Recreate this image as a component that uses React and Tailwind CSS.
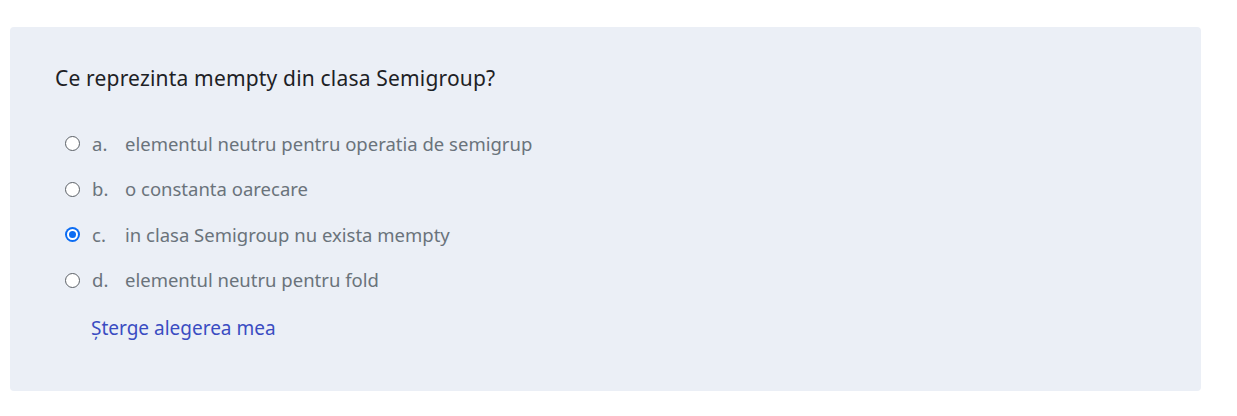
import React from "react";

const options = [
  { l: "a.", t: "elementul neutru pentru operatia de semigrup" },
  { l: "b.", t: "o constanta oarecare" },
  { l: "c.", t: "in clasa Semigroup nu exista mempty", checked: true },
  { l: "d.", t: "elementul neutru pentru fold" },
];

function Radio({ checked }) {
  if (checked) {
    return (
      <span className="w-[15px] h-[15px] rounded-full bg-[#0b6cf3] flex items-center justify-center shrink-0">
        <span className="w-[11px] h-[11px] rounded-full bg-white flex items-center justify-center">
          <span className="w-[7px] h-[7px] rounded-full bg-[#0b6cf3]" />
        </span>
      </span>
    );
  }
  return <span className="w-[15px] h-[15px] rounded-full border-[1.5px] border-[#5b6066] bg-white shrink-0" />;
}

export default function App() {
  return (
    <div className="w-[1237px] h-[416px] bg-white pt-[27px] pl-[10px]" style={{ fontFamily: "'Noto Sans', sans-serif" }}>
      <div className="w-[1191px] h-[364px] bg-[#ebeff6] rounded-[4px] pl-[45px] pt-[37px]">
        <div className="text-[21px] leading-[29px] tracking-[0.18px] text-[#1d2125]">Ce reprezinta mempty din clasa Semigroup?</div>
        <div className="mt-[28px] pl-[10px] flex flex-col">
          {options.map((o) => (
            <label key={o.l} className="h-[45.5px] flex items-center text-[18.5px] text-[#6a737b]">
              <Radio checked={o.checked} />
              <span className="ml-[12px] w-[33px]">{o.l}</span>
              <span>{o.t}</span>
            </label>
          ))}
        </div>
        <div className="mt-[11px] ml-[36px] text-[19px] text-[#3a4cc2]">Șterge alegerea mea</div>
      </div>
    </div>
  );
}
